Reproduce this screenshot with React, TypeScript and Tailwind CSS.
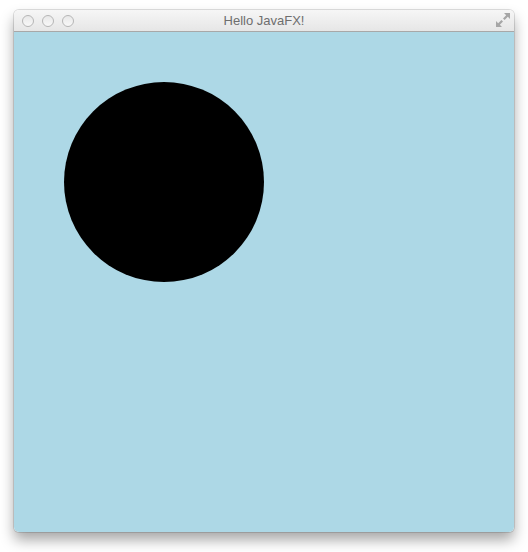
import React from 'react';

const TrafficLight: React.FC = () => (
  <span className="block h-3 w-3 rounded-full border border-[#b5b5b5] bg-gradient-to-b from-[#e8e8e8] to-[#f8f8f8]" />
);

const App: React.FC = () => {
  return (
    <div className="h-[552px] w-[528px] bg-white pl-[14px] pt-[10px]">
      <div className="w-[500px] overflow-hidden rounded-[5px] shadow-[0_8px_14px_rgba(0,0,0,0.35),0_0_0_1px_rgba(0,0,0,0.12)]">
        {/* title bar */}
        <div className="relative flex h-[22px] items-center border-b border-[#a8a8a8] bg-gradient-to-b from-[#f6f6f6] to-[#e6e6e6] px-2">
          <div className="flex gap-2">
            <TrafficLight />
            <TrafficLight />
            <TrafficLight />
          </div>
          <div className="absolute inset-x-0 top-0 flex h-[21px] items-center justify-center text-[13px] leading-none text-[#6e6e6e] font-['Liberation_Sans',Arial,sans-serif]">
            Hello JavaFX!
          </div>
          <svg width="16" height="16" viewBox="0 0 16 16" className="absolute right-[3px] top-[2px]">
            <path d="M15 1 L9 1 L11.2 3.2 L8 6.4 L9.6 8 L12.8 4.8 L15 7 Z" fill="#a6a6a6" />
            <path d="M1 15 L7 15 L4.8 12.8 L8 9.6 L6.4 8 L3.2 11.2 L1 9 Z" fill="#a6a6a6" />
          </svg>
        </div>
        {/* scene */}
        <svg width="500" height="500" viewBox="0 0 500 500" className="block">
          <rect width="500" height="500" fill="#add8e6" />
          <circle cx="150" cy="150" r="100" fill="#000" />
        </svg>
      </div>
    </div>
  );
};

export default App;
